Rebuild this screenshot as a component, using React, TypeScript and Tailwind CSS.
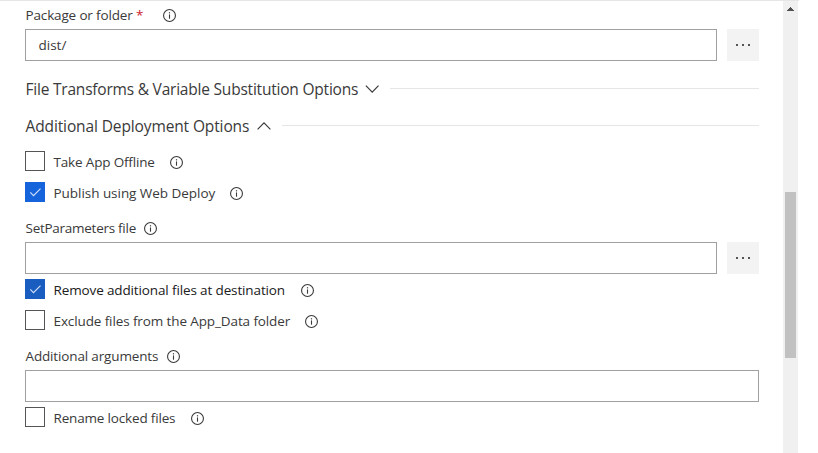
import type { ReactNode } from "react";

function InfoIcon() {
  return (
    <svg className="block h-[13px] w-[13px] shrink-0 text-[#3a3a3a]" viewBox="0 0 13 13" fill="none">
      <circle cx="6.5" cy="6.5" r="5.95" stroke="currentColor" strokeWidth="1.1" />
      <path d="M6.5 5.4v4.3" stroke="currentColor" strokeWidth="1.1" />
      <path d="M6.5 3.2v1.2" stroke="currentColor" strokeWidth="1.2" />
    </svg>
  );
}

function Label({ children, className }: { children: ReactNode; className: string }) {
  return (
    <div className="flex h-7 items-center pt-px">
      <span className={`shrink-0 whitespace-nowrap pl-[0.5px] ${className}`}>{children}</span>
      <InfoIcon />
    </div>
  );
}

function Field({ value, browse }: { value?: string; browse?: boolean }) {
  return (
    <div className="flex h-8 gap-[10px]">
      <div className="flex flex-1 items-center border border-[#a0a0a0] bg-white pl-[12.5px]">{value}</div>
      {browse && (
        <button className="flex w-8 items-center justify-center gap-1 bg-[#f3f3f3]">
          <span className="h-[2px] w-[2px] bg-[#555555]" />
          <span className="h-[2px] w-[2px] bg-[#555555]" />
          <span className="h-[2px] w-[2px] bg-[#555555]" />
        </button>
      )}
    </div>
  );
}

function Section({ title, open, className }: { title: string; open?: boolean; className: string }) {
  return (
    <div className="flex h-[37px] items-center text-[15.5px] text-[#3a3a3a]">
      <span className={`relative top-px shrink-0 whitespace-nowrap pl-[0.5px] ${className}`}>{title}</span>
      <svg className="relative top-[0.5px] h-2 w-[14px] shrink-0" viewBox="0 0 14 8" fill="none" stroke="currentColor" strokeWidth="1.2">
        <path d={open ? "M.6 7.3 7 .9l6.4 6.4" : "M.9.7 7.2 7.1 13.5.7"} />
      </svg>
      <span className="ml-[11px] h-px flex-1 bg-[#e6e6e6]" />
    </div>
  );
}

function Check({ label, box, className }: { label: string; box?: string; className: string }) {
  return (
    <div className="flex h-5 items-center">
      <span className={`mr-2 flex h-5 w-5 shrink-0 items-center justify-center ${box ?? "border border-[#555555]"}`}>
        {box && (
          <svg className="h-5 w-5" viewBox="0 0 20 20" fill="none" stroke="#d5e3f8" strokeWidth="1.1">
            <path d="m5.3 10.4 3.2 3.2 7-7" />
          </svg>
        )}
      </span>
      <span className={`relative top-px shrink-0 whitespace-nowrap pl-[0.5px] ${className}`}>{label}</span>
      <span className="relative top-[1.5px]">
        <InfoIcon />
      </span>
    </div>
  );
}

export default function App() {
  return (
    <div className="flex h-[453px] w-[818px] overflow-hidden bg-white font-['Open_Sans','Noto_Sans',sans-serif] text-[13.5px] text-[#3a3a3a]">
      <div className="flex w-[799px] border-t border-[#e6e6e6]">
        <main className="w-[783px] pr-6 pl-[25px]">
          <Label className="w-[138px] tracking-[-0.15px]">
            Package or folder <span className="text-[#cd1a2b]">*</span>
          </Label>
          <Field value="dist/" browse />
          <div className="pt-[9px] pb-[7px]">
            <Section title="File Transforms & Variable Substitution Options" className="w-[340px] tracking-[-0.21px]" />
            <Section title="Additional Deployment Options" open className="w-[232px] tracking-[-0.12px]" />
          </div>
          <div className="flex flex-col gap-[11px] pb-3">
            <Check label="Take App Offline" className="w-[117px] tracking-[-0.17px]" />
            <Check label="Publish using Web Deploy" box="bg-[#1664dc]" className="w-[177px] tracking-[-0.04px]" />
          </div>
          <Label className="w-[119px] tracking-[-0.27px]">SetParameters file</Label>
          <Field browse />
          <div className="flex flex-col gap-[11px] pt-[5px] pb-3">
            <Check label="Remove additional files at destination" box="bg-[#1a5dc0]" className="w-[247.5px] tracking-[-0.13px] text-[#202020]" />
            <Check label="Exclude files from the App_Data folder" className="w-[251.5px] tracking-[-0.11px]" />
          </div>
          <Label className="w-[142px] tracking-[-0.15px]">Additional arguments</Label>
          <Field />
          <div className="pt-[5px]">
            <Check label="Rename locked files" className="w-[137.5px] tracking-[-0.17px]" />
          </div>
        </main>
        <aside className="flex w-[15px] flex-col items-center bg-[#f0f0f0]">
          <svg className="mt-1.5 h-1 w-[7px]" viewBox="0 0 7 4" shapeRendering="crispEdges" fill="#505050">
            <path d="M3 0h1v1h1v1h1v1h1v1H0V3h1V2h1V1h1z" />
          </svg>
          <span className="mt-[181px] h-[166px] w-[11px] bg-[#c1c1c1]" />
        </aside>
      </div>
    </div>
  );
}
